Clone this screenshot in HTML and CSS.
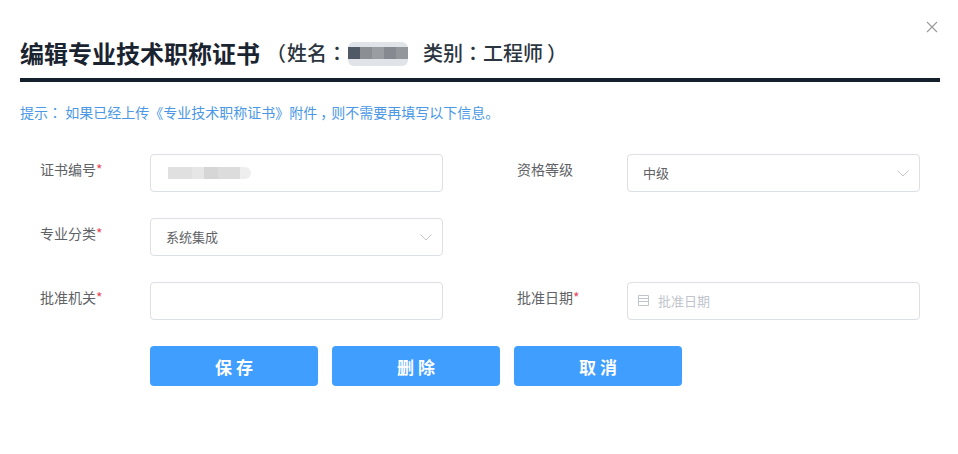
FILE: index.html
```html
<!DOCTYPE html>
<html lang="zh-CN">
<head>
<meta charset="utf-8">
<title>编辑专业技术职称证书</title>
<link rel="stylesheet" href="styles.css">
</head>
<body>
<div class="dialog">
  <button class="close" aria-label="关闭">
    <svg viewBox="0 0 12 12" width="12" height="12"><path d="M1 1L11 11M11 1L1 11" fill="none" stroke="#9a9a9a" stroke-width="1.1"/></svg>
  </button>
  <header class="head">
    <h1 class="title">编辑专业技术职称证书</h1>
    <span class="sub sub-open"><span class="punct p-open" lang="zh-TW">（</span>姓名<span class="punct" lang="zh-TW">：</span></span><span class="name-blur"><i></i></span><span class="sub sub-type">类别<span class="punct" lang="zh-TW">：</span>工程师<span class="punct p-close" lang="zh-TW">）</span></span>
  </header>
  <p class="tip">提示<span class="punct" lang="zh-TW">：</span> 如果已经上传《专业技术职称证书》附件<span class="p-comma">，</span>则不需要再填写以下信息。</p>
  <form class="form">
    <div class="field">
      <label class="label">证书编号<em>*</em></label>
      <div class="control"><span class="num-blur"></span></div>
    </div>
    <div class="field">
      <label class="label">资格等级</label>
      <div class="control select"><span>中级</span>
        <svg class="chev" viewBox="0 0 12 7" width="12" height="7"><path d="M.5 .5L6 6L11.5 .5" fill="none" stroke="#c0c4cc" stroke-width="1"/></svg>
      </div>
    </div>
    <div class="field">
      <label class="label">专业分类<em>*</em></label>
      <div class="control select"><span>系统集成</span>
        <svg class="chev" viewBox="0 0 12 7" width="12" height="7"><path d="M.5 .5L6 6L11.5 .5" fill="none" stroke="#c0c4cc" stroke-width="1"/></svg>
      </div>
    </div>
    <div class="field"></div>
    <div class="field">
      <label class="label">批准机关<em>*</em></label>
      <div class="control"></div>
    </div>
    <div class="field">
      <label class="label">批准日期<em>*</em></label>
      <div class="control date">
        <svg class="cal" viewBox="0 0 12 12" width="12" height="12"><path d="M.5 .5H10.5V10.5H.5ZM.5 3.5H10.5M.5 6.5H10.5" fill="none" stroke="#c0c4cc" stroke-width="1"/></svg>
        <span class="placeholder">批准日期</span>
      </div>
    </div>
    <div class="actions">
      <button type="button" class="btn">保 存</button>
      <button type="button" class="btn">删 除</button>
      <button type="button" class="btn">取 消</button>
    </div>
  </form>
</div>
</body>
</html>
```

FILE: styles.css
```css
* { box-sizing: border-box; }
html, body { margin: 0; height: 100%; }
body {
  background: #fff;
  font-family: "Noto Sans CJK SC", "Liberation Sans", sans-serif;
  color: #606266;
  overflow: hidden;
}
.dialog { position: relative; width: 958px; height: 454px; padding: 36px 18px 0 20px; }
.close {
  position: absolute; top: 21px; left: 926px;
  width: 12px; height: 12px; padding: 0; border: 0; background: none; display: block;
}
.close svg { display: block; }
.head {
  display: flex; align-items: center;
  height: 46px; padding-bottom: 8px;
  border-bottom: 4px solid #14202b;
  color: #1f2933;
}
.title { margin: 0; font-size: 24px; line-height: 34px; font-weight: 700; color: #1a2430; }
.sub { font-size: 20px; line-height: 34px; color: #2b3540; font-weight: 500; white-space: nowrap; }
.sub-open { margin-left: 7px; }
.sub-type { margin-left: 15px; }
.punct { font-family: "Noto Sans CJK TC", sans-serif; }
.p-open { margin-left: -1px; margin-right: 1px; }
.p-close { margin-left: 4px; }
.p-comma { margin-left: 3px; margin-right: 2px; letter-spacing: -5px; }
.name-blur {
  display: block; flex: none; width: 60px; height: 24px; margin: 2px 0 0 1px;
  background: #e0e3e7; border-radius: 6px; padding-top: 5px;
}
.name-blur i {
  display: block; height: 12px;
  background: linear-gradient(90deg, #4f5a66 0 12px, #8b8e93 12px 24px, #9a9da2 24px 36px, #868a90 36px 48px, #93969b 48px);
}
.tip { margin: 20px 0 0; font-size: 14px; line-height: 20px; color: #4a98e6; }
.form {
  display: grid; grid-template-columns: 403px 403px; column-gap: 74px; row-gap: 26px;
  margin: 32px 0 0 20px;
}
.field { display: flex; height: 38px; }
.label { width: 110px; font-size: 14px; line-height: 30px; color: #606266; }
.label em { font-style: normal; color: #e5485a; }
.control {
  flex: none; display: flex; align-items: center;
  width: 293px; height: 38px; padding: 0 15px;
  border: 1px solid #dcdfe6; border-radius: 4px;
  font-size: 13px; color: #606266;
  background: #fff;
}
.select { justify-content: space-between; }
.select span { line-height: 38px; }
.chev { margin-right: -5px; }
.date { padding-left: 10px; }
.cal { margin-right: 8px; }
.placeholder { color: #c0c4cc; position: relative; top: -1px; }
.num-blur {
  display: block; width: 83px; height: 12px; margin-left: 2px;
  border-radius: 0 6px 6px 0;
  background: linear-gradient(90deg, #e0e0e0 0 24px, #e6e6e6 24px 36px, #d6d6d6 36px 50px, #dcdcdc 50px 72px, #eeeeee 72px);
}
.actions { grid-column: 1 / -1; display: flex; gap: 14px; padding-left: 110px; }
.btn {
  width: 168px; height: 40px; padding: 0; border: 0; border-radius: 4px;
  background: #409eff; color: #fff;
  font-family: inherit; font-size: 17px; font-weight: 700;
}
```
